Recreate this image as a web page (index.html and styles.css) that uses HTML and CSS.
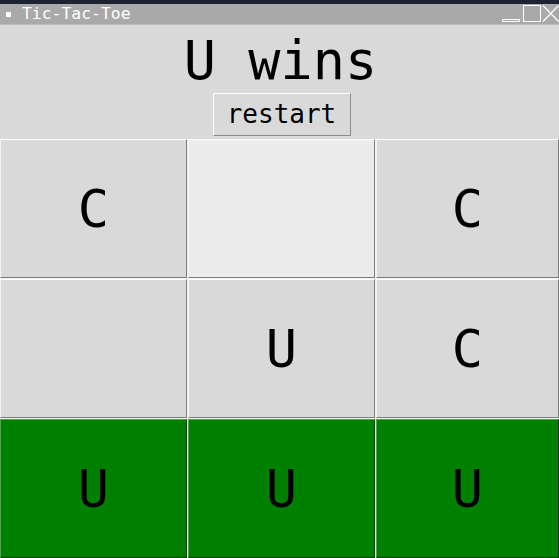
FILE: index.html
```html
<!DOCTYPE html>
<html>
<head>
<meta charset="utf-8">
<title>Tic-Tac-Toe</title>
<link rel="stylesheet" href="styles.css">
</head>
<body>
<div class="screen-top"></div>
<div class="titlebar">
  <div class="title-left">
    <span class="title-icon"></span>
    <span class="title-text">Tic-Tac-Toe</span>
  </div>
  <div class="title-controls">
    <svg class="ctl" width="21" height="20" viewBox="0 0 21 20"><rect x="1.5" y="15.5" width="17" height="2" fill="none" stroke="#fff" stroke-width="1"/></svg>
    <svg class="ctl" width="20" height="20" viewBox="0 0 20 20"><rect x="1.5" y="1.5" width="17" height="16" fill="none" stroke="#fff" stroke-width="1"/></svg>
    <svg class="ctl" width="17" height="20" viewBox="0 0 17 20"><path d="M1 1.5 L16.5 17.5 M16.5 1.5 L1 17.5" stroke="#fff" stroke-width="1.2" fill="none"/></svg>
  </div>
</div>
<div class="window">
  <div class="header">
    <div class="status">U wins</div>
    <button class="restart">restart</button>
  </div>
  <div class="board">
    <div class="cell">C</div>
    <div class="cell active"></div>
    <div class="cell">C</div>
    <div class="cell"></div>
    <div class="cell">U</div>
    <div class="cell">C</div>
    <div class="cell win">U</div>
    <div class="cell win">U</div>
    <div class="cell win">U</div>
  </div>
</div>
</body>
</html>
```
FILE: styles.css
```css
html, body {
  margin: 0;
  padding: 0;
  width: 559px;
  height: 558px;
  overflow: hidden;
  background: #d9d9d9;
  font-family: "DejaVu Sans Mono", "Liberation Mono", monospace;
}

.screen-top {
  height: 4px;
  background: #1c2333;
}

.titlebar {
  height: 20px;
  background: #a9a9a9;
  display: flex;
  justify-content: space-between;
  align-items: center;
  border-bottom: 1px solid #bdbdbd;
}

.title-left {
  display: flex;
  align-items: center;
  padding-left: 6px;
}

.title-icon {
  width: 5px;
  height: 5px;
  background: #ffffff;
  margin-right: 11px;
}

.title-text {
  color: #ffffff;
  font-size: 16.4px;
  line-height: 20px;
}

.title-controls {
  display: flex;
  align-items: center;
  height: 20px;
}

.ctl {
  display: block;
}

.window {
  display: flex;
  flex-direction: column;
}

.header {
  height: 114px;
  display: flex;
  flex-direction: column;
  align-items: center;
}

.status {
  margin-top: 5px;
  font-size: 53.5px;
  line-height: 61px;
  color: #000;
  padding-left: 2px;
}

.restart {
  margin-top: 2px;
  font-family: "DejaVu Sans Mono", "Liberation Mono", monospace;
  font-size: 26px;
  line-height: 31px;
  padding: 5px 13px;
  width: 138px;
  height: 43px;
  box-sizing: border-box;
  background: #d9d9d9;
  color: #000;
  border-style: solid;
  border-width: 1px;
  border-color: #ffffff #8a8a8a #8a8a8a #ffffff;
  border-radius: 0;
  margin-left: 4px;
}

.board {
  display: grid;
  grid-template-columns: 187px 187px 183px;
  grid-template-rows: 139px 139px 139px;
  gap: 1px;
  background: #f4f4f4;
}

.cell {
  box-sizing: border-box;
  background: #d9d9d9;
  border-style: solid;
  border-width: 1px;
  border-color: #ffffff #7c7c7c #7c7c7c #f4f4f4;
  display: flex;
  align-items: center;
  justify-content: center;
  font-size: 52px;
  color: #000;
}

.cell.active {
  background: #ececec;
}

.cell.win {
  background: #008000;
  border-color: #4ea64e #0c3a0c #0c3a0c #4ea64e;
}
```
